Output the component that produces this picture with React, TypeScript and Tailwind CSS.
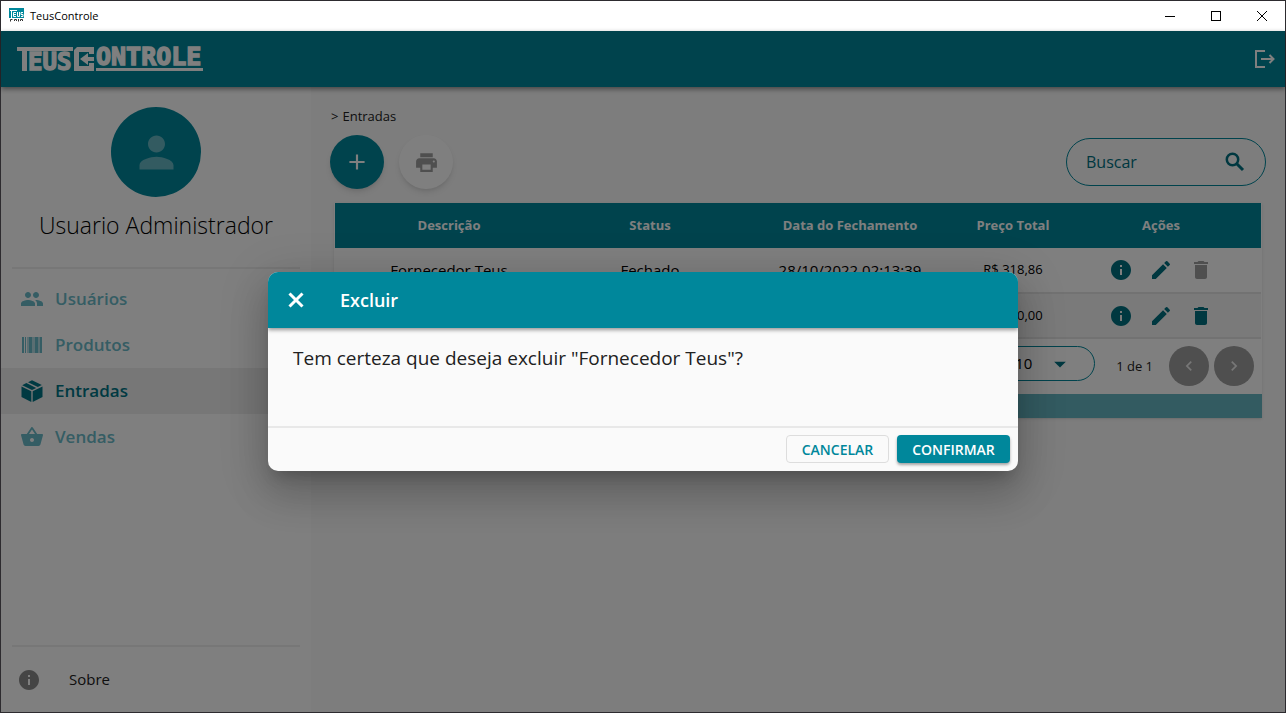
import React from "react";
import {
  MdAdd,
  MdArrowDropDown,
  MdChevronLeft,
  MdChevronRight,
  MdDelete,
  MdEdit,
  MdInfo,
  MdPeople,
  MdPerson,
  MdPrint,
  MdShoppingBasket,
} from "react-icons/md";

function AppIcon() {
  return (
    <svg width="16" height="16" viewBox="0 0 16 16" aria-hidden="true">
      <rect x="0" y="0" width="15" height="10" fill="#00879b" />
      <path d="M1 2.5h7M2.5 2v8" stroke="#fff" strokeWidth="1" />
      <path d="M7 4.500H4.500v4H7M4.500 6.500H7M8.500 4v4.500h2V4M14 4.500h-2v2h2v2h-2" stroke="#fff" fill="none" />
      <path
        d="M1.500 13.500V11.500h2M5.500 13V11.500h2V13M9.500 11v2.500M11.500 13V11.500h2V13"
        stroke="#333"
        fill="none"
      />
    </svg>
  );
}

function Logo() {
  return (
    <svg
      width="190"
      height="30"
      viewBox="0 -3 190 30"
      fill="#fff"
      fontFamily="DejaVu Sans Mono"
      fontWeight="700"
      className="overflow-visible"
      role="img"
      aria-label="TeusControle"
    >
      <rect x="0" y="0" width="56" height="4" />
      <rect x="5" y="0" width="5" height="24" />
      <text x="11" y="23" fontSize="24" stroke="#fff" strokeWidth="1.4">
        EUS
      </text>
      <path d="M60 0h17v7h-5V5H62v14h10v-3h5v8H57V3z" />
      <path d="M63 12l8-6v4h6v4h-6v4z" />
      <text x="79" y="18" fontSize="25" stroke="#fff" strokeWidth="1.4">
        ONTROLE
      </text>
      <rect x="79" y="21" width="107" height="3" />
    </svg>
  );
}

function LogoutIcon() {
  return (
    <svg width="22" height="20" viewBox="0 0 22 20" fill="none" stroke="#fff" strokeWidth="2" aria-hidden="true">
      <path d="M11 2H2v16h9" />
      <path d="M7 10h12" />
      <path d="M15.500 6l4 4-4 4" />
    </svg>
  );
}

function SearchIcon() {
  return (
    <svg width="24" height="24" viewBox="0 0 24 24" fill="none" stroke="currentColor" strokeWidth="2.5" aria-hidden="true">
      <circle cx="9.500" cy="9.500" r="5.700" />
      <path d="M13.500 13.500l6.500 6.500" strokeWidth="3" />
    </svg>
  );
}

function CloseIcon() {
  return (
    <svg width="24" height="24" viewBox="0 0 24 24" fill="none" stroke="currentColor" strokeWidth="3" aria-hidden="true">
      <path d="M5.500 5.500l13 13M18.500 5.500l-13 13" />
    </svg>
  );
}

function BarcodeIcon() {
  return (
    <svg width="20" height="16" viewBox="0 0 20 16" fill="currentColor" aria-hidden="true">
      <path d="M0 0h2v16H0zM3 0h1v16H3zM5.500 0h1v16h-1zM7 0h3.500v16H7zM11.500 0h1v16h-1zM13 0h3v16h-3zM16.500 0h1v16h-1zM18 0h2v16h-2z" />
    </svg>
  );
}

function BoxIcon() {
  return (
    <svg width="22" height="22" viewBox="0 0 22 22" fill="currentColor" aria-hidden="true">
      <path d="M0.500 6.600L10.300 11.300V22L0.500 17z" />
      <path d="M21.500 6.600L11.700 11.300V22L21.500 17z" />
      <path d="M1.200 5.300L5.400 3.100L15.200 7.900L11 10z" />
      <path d="M7 2.200L11 0.200L20.800 5.100L16.800 7.100z" />
    </svg>
  );
}

const menu = [
  { label: "Usuários", icon: <MdPeople size={24} />, active: false },
  { label: "Produtos", icon: <BarcodeIcon />, active: false },
  { label: "Entradas", icon: <BoxIcon />, active: true },
  { label: "Vendas", icon: <MdShoppingBasket size={24} />, active: false },
];

const rows = [
  { name: "Fornecedor Teus", status: "Fechado", date: "28/10/2022 02:13:39", total: "R$ 318,86", open: false },
  { name: "Fornecedor Teus", status: "Aberto", date: "", total: "R$ 100,00", open: true },
];

function TitleBar() {
  return (
    <div className="flex h-[30px] items-center bg-white pl-2">
      <AppIcon />
      <span className="ml-[5px] flex-1 text-[11px] text-black">TeusControle</span>
      <button aria-label="Minimizar" className="flex h-full w-[46px] items-center justify-center">
        <svg width="10" height="10" stroke="#000" fill="none">
          <path d="M0 5.500h10" />
        </svg>
      </button>
      <button aria-label="Maximizar" className="flex h-full w-[46px] items-center justify-center">
        <svg width="10" height="10" stroke="#000" fill="none">
          <rect x="0.500" y="0.500" width="9" height="9" />
        </svg>
      </button>
      <button aria-label="Fechar janela" className="flex h-full w-[46px] items-center justify-center">
        <svg width="10" height="10" stroke="#000" fill="none">
          <path d="M0 0l10 10M10 0L0 10" />
        </svg>
      </button>
    </div>
  );
}

function Sidebar() {
  return (
    <aside className="flex w-[310px] shrink-0 flex-col bg-white">
      <div className="flex flex-col items-center pt-5">
        <div className="flex size-[90px] items-center justify-center rounded-full bg-[#00879b] text-[#66b7c3]">
          <MdPerson size={51} />
        </div>
        <h1 className="mt-2 text-[23px] leading-10 font-light text-black">Usuario Administrador</h1>
      </div>
      <hr className="mx-[11px] mt-[22px] border-t-2 border-[#eeeeee]" />
      <nav className="mt-[7px]">
        {menu.map((m) => (
          <a
            key={m.label}
            href="#"
            className={
              m.active
                ? "flex h-[46px] items-center bg-[#eeeeee] pl-[19px] text-[#007485]"
                : "flex h-[46px] items-center pl-[19px] text-[#6abac8]"
            }
          >
            <span className="flex w-6 justify-center">{m.icon}</span>
            <span className="ml-[11px] text-[17px] font-semibold">{m.label}</span>
          </a>
        ))}
      </nav>
      <div className="mt-auto">
        <hr className="mx-[11px] border-t-2 border-[#eeeeee]" />
        <a href="#" className="flex h-[65px] items-center pl-4 text-[#8a8a8a]">
          <MdInfo size={24} />
          <span className="ml-7 text-[15px] text-[#212121]">Sobre</span>
        </a>
      </div>
    </aside>
  );
}

function EntriesTable() {
  return (
    <div className="mx-[23px] mt-[14px] bg-white shadow">
      <div className="px-px">
        <table className="w-full table-fixed border-collapse text-center">
          <colgroup>
            <col className="w-[228px]" />
            <col className="w-[174px]" />
            <col className="w-[226px]" />
            <col className="w-[100px]" />
            <col className="w-[198px]" />
          </colgroup>
          <thead>
            <tr className="h-[45px] bg-[#00879b] text-[13px] text-white">
              <th>Descrição</th>
              <th>Status</th>
              <th>Data do Fechamento</th>
              <th>Preço Total</th>
              <th className="pr-[2px]">Ações</th>
            </tr>
          </thead>
          <tbody>
            {rows.map((r) => (
              <tr
                key={r.status}
                className={
                  r.open
                    ? "h-[45px] border-b-2 border-[#e4e4e4] bg-[#f5f5f5] text-[15px] text-black"
                    : "h-[45px] border-b-2 border-[#e4e4e4] text-[15px] text-black"
                }
              >
                <td>{r.name}</td>
                <td>{r.status}</td>
                <td>{r.date}</td>
                <td className="text-[13px]">{r.total}</td>
                <td className="pr-[2px]">
                  <div className="flex justify-center gap-4 text-[#007080]">
                    <button aria-label="Detalhes">
                      <MdInfo size={24} />
                    </button>
                    <button aria-label="Editar">
                      <MdEdit size={24} />
                    </button>
                    <button aria-label="Excluir" className={r.open ? "" : "text-[#9e9e9e]"} disabled={!r.open}>
                      <MdDelete size={24} />
                    </button>
                  </div>
                </td>
              </tr>
            ))}
          </tbody>
        </table>
      </div>
      <div className="flex h-[55px] items-start justify-end pt-[7px] pr-2">
        <div className="relative mr-[21px] flex items-center">
          <select
            aria-label="Itens por página"
            defaultValue="10"
            className="h-[35px] w-[110px] appearance-none rounded-full border border-[#00879b] pl-[29px] text-[15px] text-black"
          >
            <option>10</option>
            <option>20</option>
          </select>
          <MdArrowDropDown size={28} className="pointer-events-none absolute right-[21px] text-[#007080]" />
        </div>
        <span className="text-[13px] leading-10 text-[#212121]">1 de 1</span>
        <button
          aria-label="Página anterior"
          className="ml-4 flex size-10 items-center justify-center rounded-full bg-[#9e9e9e] text-[#eeeeee]"
        >
          <MdChevronLeft size={20} />
        </button>
        <button
          aria-label="Próxima página"
          className="ml-[5px] flex size-10 items-center justify-center rounded-full bg-[#9e9e9e] text-[#eeeeee]"
        >
          <MdChevronRight size={20} />
        </button>
      </div>
      <div className="h-6 bg-[#66b7c3]" />
    </div>
  );
}

function Content() {
  return (
    <main className="min-w-0 flex-1 bg-[#fafafa] pt-5">
      <p className="flex gap-1 pl-5 text-[13px] leading-[18px] text-[#212121]">
        <span>&gt;</span>
        <span>Entradas</span>
      </p>
      <div className="mt-[10px] flex items-center pr-[19px] pl-[19px]">
        <button
          aria-label="Adicionar"
          className="flex size-[54px] items-center justify-center rounded-full bg-[#00879b] text-white shadow-md"
        >
          <MdAdd size={26} />
        </button>
        <button
          aria-label="Imprimir"
          className="ml-[15px] flex size-[54px] items-center justify-center rounded-full bg-white text-[#9e9e9e] shadow-md"
        >
          <MdPrint size={25} />
        </button>
        <label className="ml-auto flex h-12 w-[200px] items-center rounded-full border border-[#00879b] pr-[18px] pl-[19px] text-[#007080]">
          <input
            aria-label="Buscar"
            placeholder="Buscar"
            className="min-w-0 flex-1 bg-transparent text-[16px] outline-none placeholder:text-[#007080]"
          />
          <SearchIcon />
        </label>
      </div>
      <EntriesTable />
    </main>
  );
}

function DeleteDialog() {
  return (
    <div
      role="dialog"
      aria-modal="true"
      aria-labelledby="dialog-title"
      className="w-[750px] max-w-full overflow-hidden rounded-[10px] bg-[#fafafa] shadow-[0_11px_15px_-7px_rgba(0,0,0,0.2),0_24px_38px_3px_rgba(0,0,0,0.14),0_9px_46px_8px_rgba(0,0,0,0.12)]"
    >
      <div className="relative flex h-14 items-center bg-[#00879b] pl-4 text-white shadow-[0_2px_4px_rgba(0,0,0,0.4)]">
        <button aria-label="Fechar">
          <CloseIcon />
        </button>
        <h2 id="dialog-title" className="ml-8 text-[18px] font-semibold">
          Excluir
        </h2>
      </div>
      <p className="h-[98px] px-[25px] pt-4 text-[19px] leading-7 text-[#212121]">
        Tem certeza que deseja excluir "Fornecedor Teus"?
      </p>
      <div className="flex items-center justify-end gap-2 border-t-2 border-[#e8e8e8] px-2 pt-[7px] pb-2 text-[14px] font-semibold">
        <button className="h-7 w-[103px] rounded border border-[#dddddd] text-[#00879b]">CANCELAR</button>
        <button className="h-7 w-[113px] rounded bg-[#00879b] text-white shadow-[0_2px_3px_rgba(0,0,0,0.35)]">
          CONFIRMAR
        </button>
      </div>
    </div>
  );
}

export default function App() {
  return (
    <div className="flex min-h-screen flex-col border border-[#2d2b2f] font-['Open_Sans','Noto_Sans',sans-serif]">
      <TitleBar />
      <div className="relative flex flex-1 flex-col">
        <header className="relative flex h-14 items-center justify-between bg-[#00879b] pr-[9px] pl-4 shadow-[0_2px_5px_rgba(0,0,0,0.45)]">
          <Logo />
          <button aria-label="Sair">
            <LogoutIcon />
          </button>
        </header>
        <div className="flex flex-1">
          <Sidebar />
          <Content />
        </div>
        <div className="absolute inset-0 flex items-center justify-center bg-black/50">
          <DeleteDialog />
        </div>
      </div>
    </div>
  );
}
